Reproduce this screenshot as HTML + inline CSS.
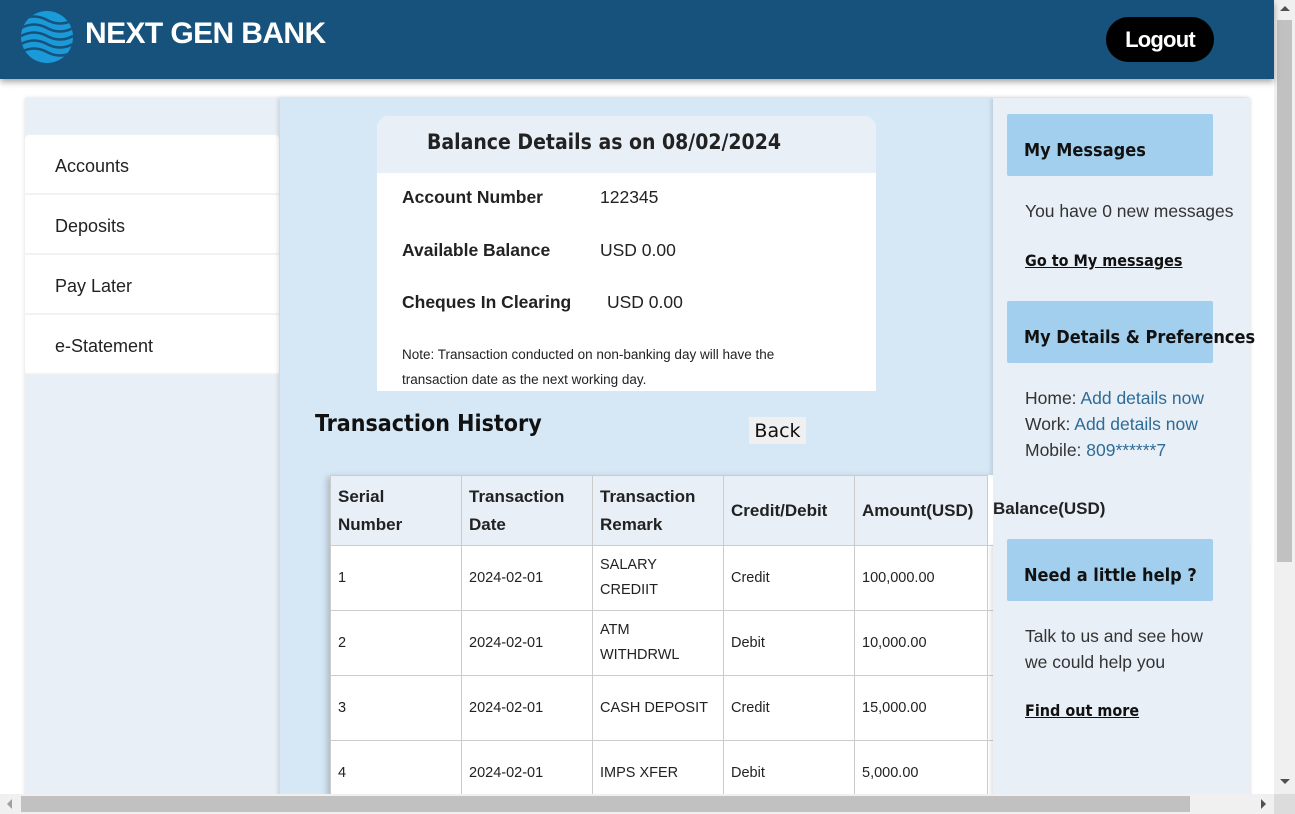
<!DOCTYPE html>
<html><head><meta charset="utf-8"><style>
*{box-sizing:border-box;margin:0;padding:0}
body{width:1295px;height:814px;overflow:hidden;background:#fff;font-family:"Liberation Sans",Arial,sans-serif;position:relative}
.hdr{position:absolute;left:0;top:0;width:1274px;height:79px;background:#17527c;box-shadow:0 3px 6px rgba(0,0,0,.35);z-index:5}
.brand{position:absolute;left:85px;top:17px;color:#fff;font-weight:bold;font-size:30px;letter-spacing:-0.6px}
.logout{position:absolute;left:1106px;top:17px;width:108px;height:45px;border-radius:23px;background:#000;color:#fff;font-weight:bold;font-size:22px;text-align:center;line-height:45px;letter-spacing:-0.8px}
.main{position:absolute;left:25px;top:98px;width:1225px;height:700px;background:#e8eff7;box-shadow:0 0 4px rgba(0,0,0,.15)}
.nav{position:absolute;left:25px;top:135px;width:254px;background:#fff;border-radius:4px}
.nav div{height:60px;line-height:62px;padding-left:30px;font-size:18px;color:#222;border-bottom:2px solid #f0f3f6}
.center{position:absolute;left:280px;top:98px;width:713px;height:700px;background:#d6e8f6;box-shadow:-2px 0 4px rgba(0,0,0,.12)}
.card{position:absolute;left:377px;top:116px;width:499px;height:275px;background:#fff;border-radius:12px 12px 0 0;overflow:hidden}
.card .t{height:57px;background:#e8eff7;font-family:"DejaVu Sans Condensed","DejaVu Sans",sans-serif;font-weight:bold;font-size:21px;color:#222;padding-left:50px;line-height:52px}
.row{position:absolute;left:25px;font-size:17.5px;color:#222}
.row b{display:inline-block}
.note{position:absolute;left:25px;top:226px;font-size:13.5px;line-height:25px;color:#222;width:440px}
.th{position:absolute;left:315px;top:411px;font-family:"DejaVu Sans Condensed","DejaVu Sans",sans-serif;font-weight:bold;font-size:23px;color:#111}
.back{position:absolute;left:749px;top:417px;width:57px;height:27px;background:#f0f0f0;font-family:"DejaVu Sans",sans-serif;font-size:19px;line-height:28px;text-align:center;color:#111}
table{position:absolute;left:330px;top:475px;border-collapse:collapse;table-layout:fixed;width:790px;box-shadow:-3px 2px 6px rgba(0,0,0,.2);background:#fff}
td,th{border:1px solid #ccc;width:131px;text-align:left;vertical-align:middle;font-size:14.5px;color:#222;padding:0 7px;height:65px;line-height:25px;font-weight:normal}
th{background:#e8eff7;font-weight:bold;font-size:17px;line-height:28px;height:70px}
.right{position:absolute;left:993px;width:257px;background:#e8eff7;box-shadow:-2px 0 4px rgba(0,0,0,.12)}
.box{position:absolute;left:1007px;width:206px;height:62px;background:#a3cfee;border-radius:2px;font-family:"DejaVu Sans Condensed","DejaVu Sans",sans-serif;font-weight:bold;font-size:18px;color:#111;padding:26px 0 0 17px;white-space:nowrap}
.tx{position:absolute;left:1025px;font-size:17.5px;color:#333;line-height:26px}
.tx a{color:#2e6b96;text-decoration:none}
.lk{position:absolute;left:1025px;font-family:"DejaVu Sans Condensed","DejaVu Sans",sans-serif;font-size:16px;color:#111;text-decoration:underline;font-weight:bold}
.vs{position:absolute;left:1274px;top:0;width:21px;height:794px;background:#f0f0f0}
.hs{position:absolute;left:0;top:794px;width:1274px;height:20px;background:#f0f0f0}
</style></head><body>
<div class="hdr">
<svg style="position:absolute;left:21px;top:11px" width="52" height="52" viewBox="0 0 52 52"><defs><clipPath id="c"><circle cx="26" cy="26" r="26"/></clipPath></defs><circle cx="26" cy="26" r="26" fill="#1a9ad8"/><g clip-path="url(#c)" stroke="#17527c" stroke-width="2.6" fill="none"><path d="M0 9 Q13 2 26 9 T52 9"/><path d="M0 17 Q13 10 26 17 T52 17"/><path d="M0 25 Q13 18 26 25 T52 25"/><path d="M0 33 Q13 26 26 33 T52 33"/><path d="M0 41 Q13 34 26 41 T52 41"/></g></svg>
<div class="brand">NEXT GEN BANK</div>
<div class="logout">Logout</div>
</div>
<div class="main"></div>
<div class="nav"><div>Accounts</div><div>Deposits</div><div>Pay Later</div><div>e-Statement</div></div>
<div class="center"></div>
<div class="card"><div class="t">Balance Details as on 08/02/2024</div>
<div class="row" style="top:71px"><b style="width:198px">Account Number</b>122345</div>
<div class="row" style="top:124px"><b style="width:198px">Available Balance</b>USD 0.00</div>
<div class="row" style="top:176px"><b style="width:205px">Cheques In Clearing</b>USD 0.00</div>
<div class="note">Note: Transaction conducted on non-banking day will have the transaction date as the next working day.</div>
</div>
<div class="th">Transaction History</div>
<div class="back">Back</div>
<table>
<colgroup><col style="width:131px"><col style="width:131px"><col style="width:131px"><col style="width:131px"><col style="width:133px"><col style="width:133px"></colgroup>
<tr><th>Serial<br>Number</th><th>Transaction Date</th><th>Transaction Remark</th><th>Credit/Debit</th><th>Amount(USD)</th><th style="background:none;border:none">Balance(USD)</th></tr>
<tr><td>1</td><td>2024-02-01</td><td>SALARY CREDIIT</td><td>Credit</td><td>100,000.00</td><td>0</td></tr>
<tr><td>2</td><td>2024-02-01</td><td>ATM<br>WITHDRWL</td><td>Debit</td><td>10,000.00</td><td>0</td></tr>
<tr><td>3</td><td>2024-02-01</td><td>CASH DEPOSIT</td><td>Credit</td><td>15,000.00</td><td>0</td></tr>
<tr><td>4</td><td>2024-02-01</td><td>IMPS XFER</td><td>Debit</td><td>5,000.00</td><td>0</td></tr>
</table>
<div class="right" style="top:98px;height:377px"></div>
<div class="right" style="top:545px;height:253px"></div>
<div style="position:absolute;left:993px;top:475px;width:257px;height:70px;background:#e8eff7"></div>
<div style="position:absolute;left:993px;top:499px;font-size:17px;font-weight:bold;color:#222">Balance(USD)</div>
<div class="box" style="top:114px">My Messages</div>
<div class="tx" style="top:198px">You have 0 new messages</div>
<div class="lk" style="top:251px">Go to My messages</div>
<div class="box" style="top:301px">My Details &amp; Preferences</div>
<div class="tx" style="top:385px">Home: <a>Add details now</a><br>Work: <a>Add details now</a><br>Mobile: <a>809******7</a></div>
<div class="box" style="top:539px">Need a little help ?</div>
<div class="tx" style="top:623px">Talk to us and see how<br>we could help you</div>
<div class="lk" style="top:701px">Find out more</div>
<div class="vs"><div style="position:absolute;left:3px;top:20px;width:15px;height:542px;background:#c1c1c1"></div>
<div style="position:absolute;left:6px;top:6px;border:5px solid transparent;border-bottom-color:#505050;border-top:0"></div>
<div style="position:absolute;left:6px;top:779px;border:5px solid transparent;border-top-color:#505050;border-bottom:0"></div></div>
<div class="hs"><div style="position:absolute;left:21px;top:2px;width:1169px;height:16px;background:#c1c1c1"></div>
<div style="position:absolute;left:7px;top:5px;border:5px solid transparent;border-right-color:#a0a0a0;border-left:0"></div>
<div style="position:absolute;left:1261px;top:5px;border:5px solid transparent;border-left-color:#505050;border-right:0"></div></div>
<div style="position:absolute;left:1274px;top:794px;width:21px;height:20px;background:#dcdcdc"></div>
</body></html>
